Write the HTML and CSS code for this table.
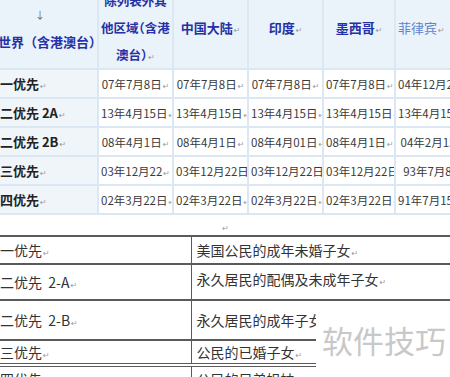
FILE: index.html
```html
<!DOCTYPE html>
<html lang="zh-CN">
<head>
<meta charset="utf-8">
<link rel="stylesheet" href="styles.css">
</head>
<body>
<div class="page">
  <table class="t1">
    <colgroup>
      <col class="c1"><col class="c2"><col class="c3"><col class="c4"><col class="c5"><col class="c6">
    </colgroup>
    <thead>
      <tr>
        <th class="lead"><span class="arrow">↓</span><br>全世界（含港澳台）<span class="pm">↵</span></th>
        <th class="narrow">除列表外其<br>他区域（含港<br>澳台）<span class="pm">↵</span></th>
        <th>中国大陆<span class="pm">↵</span></th>
        <th>印度<span class="pm">↵</span></th>
        <th>墨西哥<span class="pm">↵</span></th>
        <th class="light">菲律宾<span class="pm">↵</span></th>
      </tr>
    </thead>
    <tbody>
      <tr>
        <td class="lead">第一优先<span class="pm">↵</span></td>
        <td>07年7月8日<span class="pm">↵</span></td>
        <td>07年7月8日<span class="pm">↵</span></td>
        <td>07年7月8日<span class="pm">↵</span></td>
        <td>07年7月8日<span class="pm">↵</span></td>
        <td class="left">04年12月22日<span class="pm">↵</span></td>
      </tr>
      <tr>
        <td class="lead">第二优先 2A<span class="pm">↵</span></td>
        <td>13年4月15日<span class="pm">↵</span></td>
        <td>13年4月15日<span class="pm">↵</span></td>
        <td>13年4月15日<span class="pm">↵</span></td>
        <td>13年4月15日<span class="pm">↵</span></td>
        <td class="left">13年4月15日<span class="pm">↵</span></td>
      </tr>
      <tr>
        <td class="lead">第二优先 2B<span class="pm">↵</span></td>
        <td>08年4月1日<span class="pm">↵</span></td>
        <td>08年4月1日<span class="pm">↵</span></td>
        <td>08年4月01日<span class="pm">↵</span></td>
        <td>08年4月1日<span class="pm">↵</span></td>
        <td class="left">&nbsp;04年2月15日<span class="pm">↵</span></td>
      </tr>
      <tr>
        <td class="lead">第三优先<span class="pm">↵</span></td>
        <td>03年12月22<span class="pm">↵</span></td>
        <td>03年12月22日</td>
        <td>03年12月22日</td>
        <td>03年12月22日</td>
        <td class="left">&nbsp;&nbsp;93年7月8日</td>
      </tr>
      <tr>
        <td class="lead">第四优先<span class="pm">↵</span></td>
        <td>02年3月22日<span class="pm">↵</span></td>
        <td>02年3月22日<span class="pm">↵</span></td>
        <td>02年3月22日<span class="pm">↵</span></td>
        <td>02年3月22日<span class="pm">↵</span></td>
        <td class="left">91年7月15日<span class="pm">↵</span></td>
      </tr>
    </tbody>
  </table>
  <p class="gap"><span class="pm">↵</span></p>
  <table class="t2">
    <colgroup><col class="d1"><col class="d2"></colgroup>
    <tr class="r1"><td>第一优先<span class="pm">↵</span></td><td>美国公民的成年未婚子女<span class="pm">↵</span></td></tr>
    <tr class="r2"><td>第二优先&nbsp; 2-A<span class="pm">↵</span></td><td class="up">永久居民的配偶及未成年子女<span class="pm">↵</span></td></tr>
    <tr class="r3"><td>第二优先&nbsp; 2-B<span class="pm">↵</span></td><td>永久居民的成年子女<span class="pm">↵</span></td></tr>
    <tr class="r4"><td>第三优先<span class="pm">↵</span></td><td>公民的已婚子女<span class="pm">↵</span></td></tr>
    <tr class="r5"><td>第四优先<span class="pm">↵</span></td><td>公民的兄弟姐妹<span class="pm">↵</span></td></tr>
  </table>
  <div class="wm">软件技巧</div>
</div>
</body>
</html>
```

FILE: styles.css
```css
html, body {
  margin: 0;
  padding: 0;
  background: #ffffff;
  overflow: hidden;
}

body {
  width: 450px;
  height: 377px;
  font-family: "Noto Sans CJK SC", "Liberation Sans", sans-serif;
  color: #333333;
}

.page {
  position: relative;
  width: 450px;
  height: 377px;
  overflow: hidden;
}

.pm {
  font-family: "DejaVu Sans", sans-serif;
  font-size: 8px;
  line-height: 0;
  font-weight: normal;
  color: #9a9a9a;
  margin-left: 1px;
}

.t1 {
  border-collapse: collapse;
  table-layout: fixed;
  width: 600px;
  margin-left: -19px;
  margin-top: -15px;
}

.t1 col.c1 { width: 116px; }
.t1 col.c2 { width: 75px; }
.t1 col.c3 { width: 75px; }
.t1 col.c4 { width: 75px; }
.t1 col.c5 { width: 72px; }
.t1 col.c6 { width: 187px; }

.t1 th,
.t1 td {
  border: 2px solid #dbe7f2;
  padding: 0 2px;
  white-space: nowrap;
  overflow: hidden;
}

.t1 th {
  height: 79px;
  background: #eaf2fa;
  color: #2531a6;
  font-size: 13px;
  font-weight: bold;
  line-height: 27px;
  text-align: center;
  vertical-align: middle;
}

.t1 th.narrow {
  font-size: 12.5px;
  font-feature-settings: "halt";
}

.t1 th.light {
  color: #5d83cf;
  font-weight: normal;
  text-align: left;
}

.t1 th .arrow {
  font-size: 10px;
  font-weight: normal;
  color: #666666;
}

.t1 td {
  height: 27px;
  font-size: 11.5px;
  line-height: 16px;
  text-align: center;
  background: #ffffff;
  color: #3a3a3a;
}

.t1 td.lead {
  background: #f0f5fa;
  text-align: left;
  padding-left: 4px;
  font-weight: bold;
  color: #222222;
  font-size: 13px;
}

.t1 td.left {
  text-align: left;
}

.gap {
  margin: 0;
  height: 20px;
  text-align: center;
  line-height: 18px;
}

.t2 {
  border-collapse: collapse;
  table-layout: fixed;
  width: 480px;
  margin-left: -15px;
  font-size: 14px;
  color: #333333;
}

.t2 col.d1 { width: 206px; }
.t2 col.d2 { width: 274px; }

.t2 td {
  border-top: 2px solid #5a5a5a;
  border-left: 1px solid #5a5a5a;
  padding: 0 0 0 5px;
  line-height: 18px;
  vertical-align: middle;
  white-space: nowrap;
  overflow: hidden;
}

.t2 td:first-child {
  border-left: none;
  padding-left: 1px;
}

.t2 td.up {
  padding-bottom: 6px;
}

.t2 .r1 { height: 28px; }
.t2 .r2 { height: 36px; }
.t2 .r3 { height: 40px; }
.t2 .r4 { height: 25px; }
.t2 .r5 { height: 26px; }
.t2 .r5 td {
  border-top: 4px double #5a5a5a;
}

.wm {
  position: absolute;
  left: 316px;
  top: 302px;
  width: 134px;
  height: 75px;
  background: #ffffff;
  color: #c8c8c8;
  font-size: 31px;
  line-height: 31px;
  padding-top: 22px;
  padding-left: 6px;
  box-sizing: border-box;
  white-space: nowrap;
}
```
